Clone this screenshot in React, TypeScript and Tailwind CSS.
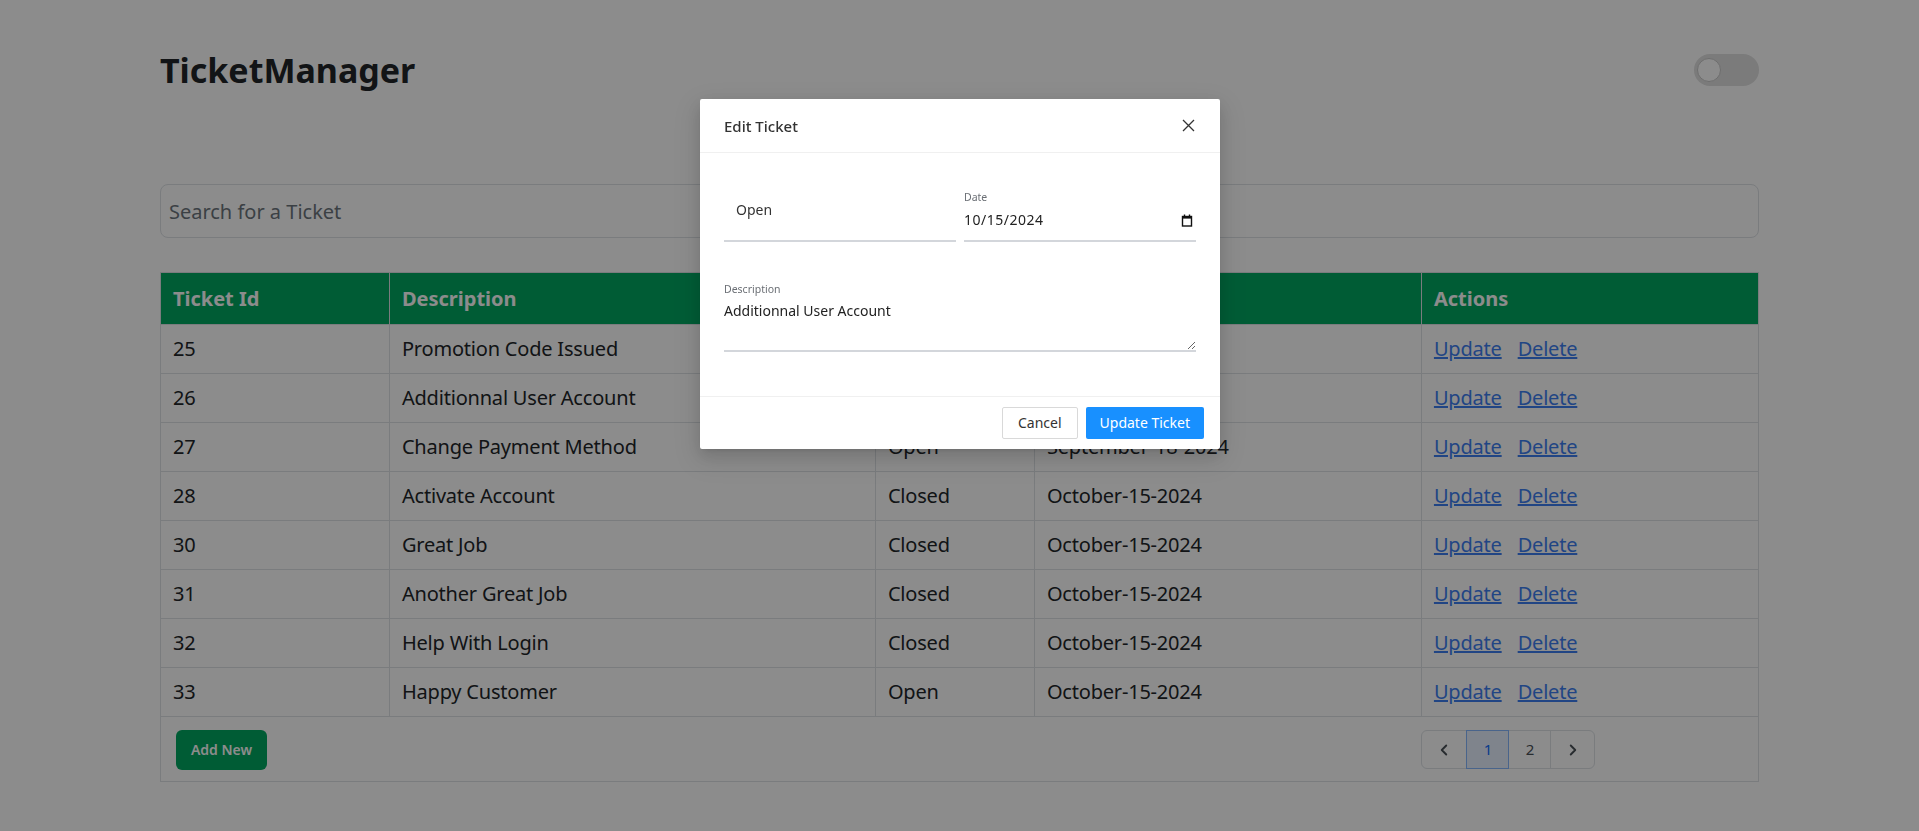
import React, { useState } from 'react';
import { ChevronLeft, ChevronRight } from 'lucide-react';

interface Ticket {
  id: number;
  description: string;
  status: string;
  date: string;
}

const tickets: Ticket[] = [
  { id: 25, description: 'Promotion Code Issued', status: 'Open', date: 'October-14-2024' },
  { id: 26, description: 'Additionnal User Account', status: 'Open', date: 'October-15-2024' },
  { id: 27, description: 'Change Payment Method', status: 'Open', date: 'September-18-2024' },
  { id: 28, description: 'Activate Account', status: 'Closed', date: 'October-15-2024' },
  { id: 30, description: 'Great Job', status: 'Closed', date: 'October-15-2024' },
  { id: 31, description: 'Another Great Job', status: 'Closed', date: 'October-15-2024' },
  { id: 32, description: 'Help With Login', status: 'Closed', date: 'October-15-2024' },
  { id: 33, description: 'Happy Customer', status: 'Open', date: 'October-15-2024' },
];

const CalendarIcon = () => (
  <svg width="12" height="13" viewBox="0 0 12 13" fill="none">
    <rect x="1.5" y="2.5" width="9" height="9.5" stroke="#111" strokeWidth="1.4" />
    <rect x="1" y="2" width="10" height="2.6" fill="#111" />
    <rect x="2.8" y="0.5" width="1.4" height="2" fill="#111" />
    <rect x="7.8" y="0.5" width="1.4" height="2" fill="#111" />
  </svg>
);

const EditTicketModal: React.FC<{ ticket: Ticket; onClose: () => void }> = ({ ticket, onClose }) => {
  const [description, setDescription] = useState(ticket.description);

  return (
    <div className="fixed inset-0 z-10 bg-black/45">
      <div className="absolute left-[700px] top-[99px] w-[520px] bg-white rounded-[2px] shadow-[0_6px_16px_rgba(0,0,0,0.12),0_3px_6px_-4px_rgba(0,0,0,0.16),0_9px_28px_8px_rgba(0,0,0,0.08)]">
        <div className="h-[54px] px-6 flex items-center justify-between border-b border-[#f0f0f0]">
          <h2 className="text-[15px] font-medium text-[#333] leading-[22px]">Edit Ticket</h2>
          <button onClick={onClose} className="w-[16px] h-[16px] flex items-center justify-center">
            <svg width="13" height="13" viewBox="0 0 13 13">
              <path d="M1 1L12 12M12 1L1 12" stroke="#333" strokeWidth="1.3" />
            </svg>
          </button>
        </div>

        <div className="px-6 pt-[26px] pb-[44px]">
          <div className="flex gap-2">
            <div className="w-[232px] h-[63px] border-b-2 border-[#d3d6db] pl-3 pt-[21px]">
              <p className="text-sm leading-5 text-[#333]">{ticket.status}</p>
            </div>
            <div className="w-[232px] h-[63px] border-b-2 border-[#d3d6db] pt-[11px]">
              <p className="text-[10.5px] leading-[14px] text-[#6b6f75]">Date</p>
              <div className="flex items-center justify-between mt-[6px] pr-[3px]">
                <span className="text-sm leading-5 tracking-[0.5px] text-[#222]">10/15/2024</span>
                <CalendarIcon />
              </div>
            </div>
          </div>

          <p className="mt-10 text-[10.5px] leading-[14px] text-[#6b6f75]">Description</p>
          <textarea
            value={description}
            onChange={(e) => setDescription(e.target.value)}
            className="mt-[2px] block w-full h-[54px] border-0 border-b-2 border-[#d3d6db] pt-[3px] text-sm leading-5 text-[#222] outline-none resize-y"
          />
        </div>

        <div className="border-t border-[#f0f0f0] px-4 py-[10px] flex justify-end gap-2">
          <button onClick={onClose} className="h-8 px-[15px] border border-[#d9d9d9] rounded-[2px] text-sm text-[#333] bg-white">
            Cancel
          </button>
          <button className="h-8 px-[14px] rounded-[2px] text-sm text-white bg-[#1890ff]">Update Ticket</button>
        </div>
      </div>
    </div>
  );
};

export default function App() {
  const [search, setSearch] = useState('');
  const [editing, setEditing] = useState<Ticket | null>(tickets[1]);

  const filtered = tickets.filter((t) => t.description.toLowerCase().includes(search.toLowerCase()));

  return (
    <div className="min-h-screen bg-white font-['Noto_Sans',sans-serif] text-[#212529]">
      <div className="w-5/6 mx-auto">
        <header className="mt-[30px] h-[80px] flex items-center justify-between">
          <h1 className="text-[34px] font-bold text-[#212529] leading-tight">TicketManager</h1>
          <div className="w-[65px] h-[32px] rounded-full bg-[#e0e0e0] flex items-center px-[3px]">
            <div className="w-[24px] h-[24px] rounded-full bg-white border border-[#c8c8c8]" />
          </div>
        </header>

        <input
          type="text"
          value={search}
          onChange={(e) => setSearch(e.target.value)}
          placeholder="Search for a Ticket"
          className="mt-[74px] block w-full h-[54px] px-2 border border-[#dee2e6] rounded-lg text-xl text-[#212529] placeholder:text-[#6c757d] outline-none"
        />

        <table className="mt-[34px] w-full table-fixed border-collapse">
          <colgroup>
            <col className="w-[229px]" />
            <col className="w-[486px]" />
            <col className="w-[159px]" />
            <col className="w-[387px]" />
            <col />
          </colgroup>
          <thead>
            <tr className="h-[52px] bg-[#00a862] text-white text-xl font-bold text-left">
              <th className="px-3 border border-[#dee2e6]">Ticket Id</th>
              <th className="px-3 border border-[#dee2e6]">Description</th>
              <th className="px-3 border border-[#dee2e6]">Status</th>
              <th className="px-3 border border-[#dee2e6]">Date</th>
              <th className="px-3 border border-[#dee2e6]">Actions</th>
            </tr>
          </thead>
          <tbody>
            {filtered.map((t) => (
              <tr key={t.id} className="h-[49px] text-xl tracking-[-0.2px]">
                <td className="px-3 border border-[#dee2e6]">{t.id}</td>
                <td className="px-3 border border-[#dee2e6]">{t.description}</td>
                <td className="px-3 border border-[#dee2e6]">{t.status}</td>
                <td className="px-3 border border-[#dee2e6]">{t.date}</td>
                <td className="px-3 border border-[#dee2e6]">
                  <div className="flex gap-4">
                    <a href="#" onClick={() => setEditing(t)} className="text-[#3d7ef0] underline">Update</a>
                    <a href="#" className="text-[#3d7ef0] underline">Delete</a>
                  </div>
                </td>
              </tr>
            ))}
          </tbody>
          <tfoot>
            <tr className="h-[65px]">
              <td colSpan={4} className="pl-[15px] border-l border-b border-[#dee2e6] align-top pt-[13px]">
                <button className="h-10 px-[15px] rounded-md bg-[#00a862] text-white text-sm font-semibold">Add New</button>
              </td>
              <td className="border-r border-b border-[#dee2e6] align-top pt-[13px]">
                <div className="inline-flex h-[39px] border border-[#dee2e6] rounded-md text-[#495057]">
                  <button className="w-[44px] flex items-center justify-center">
                    <ChevronLeft size={18} strokeWidth={2.5} />
                  </button>
                  <button className="w-[43px] flex items-center justify-center border border-[#86b7fe] bg-[#e7f1ff] text-[#0d6efd] text-[15px] -my-px">1</button>
                  <button className="w-[42px] flex items-center justify-center border-r border-[#dee2e6] text-[15px]">2</button>
                  <button className="w-[43px] flex items-center justify-center">
                    <ChevronRight size={18} strokeWidth={2.5} />
                  </button>
                </div>
              </td>
            </tr>
          </tfoot>
        </table>
      </div>

      {editing && <EditTicketModal ticket={editing} onClose={() => setEditing(null)} />}
    </div>
  );
}
